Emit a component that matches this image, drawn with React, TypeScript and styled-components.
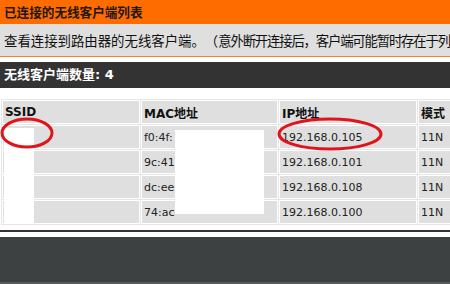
import React from "react"
import styled, { createGlobalStyle } from "styled-components"

const GlobalStyle = createGlobalStyle`
body {
    margin: 0;
    overflow: hidden;
    background: #fff;
    font-family: "DejaVu Sans", "Noto Sans CJK SC", sans-serif;
    text-spacing-trim: space-all;
}
`

const Page = styled.div`
position: relative;
width: 450px;
height: 284px;
overflow: hidden;
display: flex;
flex-direction: column;
`

const TitleBar = styled.div`
height: 24px;
line-height: 24px;
background: #fe6c00;
padding-left: 4px;
color: #24170f;
font-family: "Noto Sans CJK SC", sans-serif;
font-weight: bold;
font-size: 12.6px;
`

const Intro = styled.div`
height: 32px;
line-height: 32px;
background: #dfdfdf;
border-bottom: 1px solid #f08530;
padding-left: 4px;
color: #111;
font-family: "Noto Sans CJK SC", sans-serif;
font-size: 13.4px;
white-space: nowrap;
overflow: hidden;
text-spacing-trim: space-all;
`

// the bracketed hint runs a bit tighter than the sentence before it
const Note = styled.span`
letter-spacing: -1.2px;
`

const SectionBar = styled.div`
margin-top: 5px;
height: 26px;
line-height: 26px;
background: #333;
padding-left: 4px;
color: #fff;
font-weight: bold;
font-size: 13px;
`

const TableWrap = styled.div`
margin-top: 11px;
padding-left: 1px;
`

const ClientTable = styled.table`
table-layout: fixed;
width: 478px;
border-collapse: separate;
border-spacing: 1px;
background: #e6e6e6;
`

const Cell = styled.td<{ $head?: boolean }>`
box-sizing: border-box;
height: 24px;
padding: 0 0 0 2px;
background: #dfdfdf;
border: 1px solid #fff;
color: ${(p) => (p.$head ? "#111" : "#222")};
font-size: ${(p) => (p.$head ? "12px" : "11px")};
font-weight: ${(p) => (p.$head ? "bold" : "normal")};
white-space: nowrap;
overflow: hidden;
vertical-align: middle;
`

const Divider = styled.div`
margin-top: 5px;
height: 2px;
background: #333;
`

const Footer = styled.div`
margin-top: 5px;
flex: 1;
background: #3d4142;
border-bottom: 2px solid #555a5b;
`

// white blocks the screenshot used to hide the client names / MACs
const Mask = styled.div`
position: absolute;
background: #fff;
`

const Marks = styled.svg`
position: absolute;
left: 0;
top: 0;
pointer-events: none;
`

const clients = [
    { mac: "f0:4f:", ip: "192.168.0.105", mode: "11N" },
    { mac: "9c:41", ip: "192.168.0.101", mode: "11N" },
    { mac: "dc:ee:", ip: "192.168.0.108", mode: "11N" },
    { mac: "74:ac", ip: "192.168.0.100", mode: "11N" },
]

const App: React.FC = () => {
    return (
        <Page>
            <GlobalStyle />
            <TitleBar>已连接的无线客户端列表</TitleBar>
            <Intro>
                查看连接到路由器的无线客户端。（<Note>意外断开连接后，客户端可能暂时存在于列表中）</Note>
            </Intro>
            <SectionBar>无线客户端数量: {clients.length}</SectionBar>
            <TableWrap>
                <ClientTable>
                    <colgroup>
                        <col style={{ width: 138 }} />
                        <col style={{ width: 137 }} />
                        <col style={{ width: 138 }} />
                        <col style={{ width: 60 }} />
                    </colgroup>
                    <tbody>
                        <tr>
                            <Cell $head>SSID</Cell>
                            <Cell $head>MAC地址</Cell>
                            <Cell $head>IP地址</Cell>
                            <Cell $head>模式</Cell>
                        </tr>
                        {clients.map((c) => (
                            <tr key={c.ip}>
                                <Cell></Cell>
                                <Cell>{c.mac}</Cell>
                                <Cell>{c.ip}</Cell>
                                <Cell>{c.mode}</Cell>
                            </tr>
                        ))}
                    </tbody>
                </ClientTable>
            </TableWrap>
            <Divider />
            <Footer />
            <Mask style={{ left: 4, top: 128, width: 30, height: 96 }} />
            <Mask style={{ left: 175, top: 130, width: 89, height: 84 }} />
            <Marks width="450" height="284" viewBox="0 0 450 284">
                <ellipse cx="27" cy="133" rx="25" ry="14" fill="none" stroke="#e0141c" strokeWidth="3" />
                <ellipse cx="330" cy="134" rx="51" ry="15" fill="none" stroke="#e0141c" strokeWidth="3" />
            </Marks>
        </Page>
    )
}

export default App
